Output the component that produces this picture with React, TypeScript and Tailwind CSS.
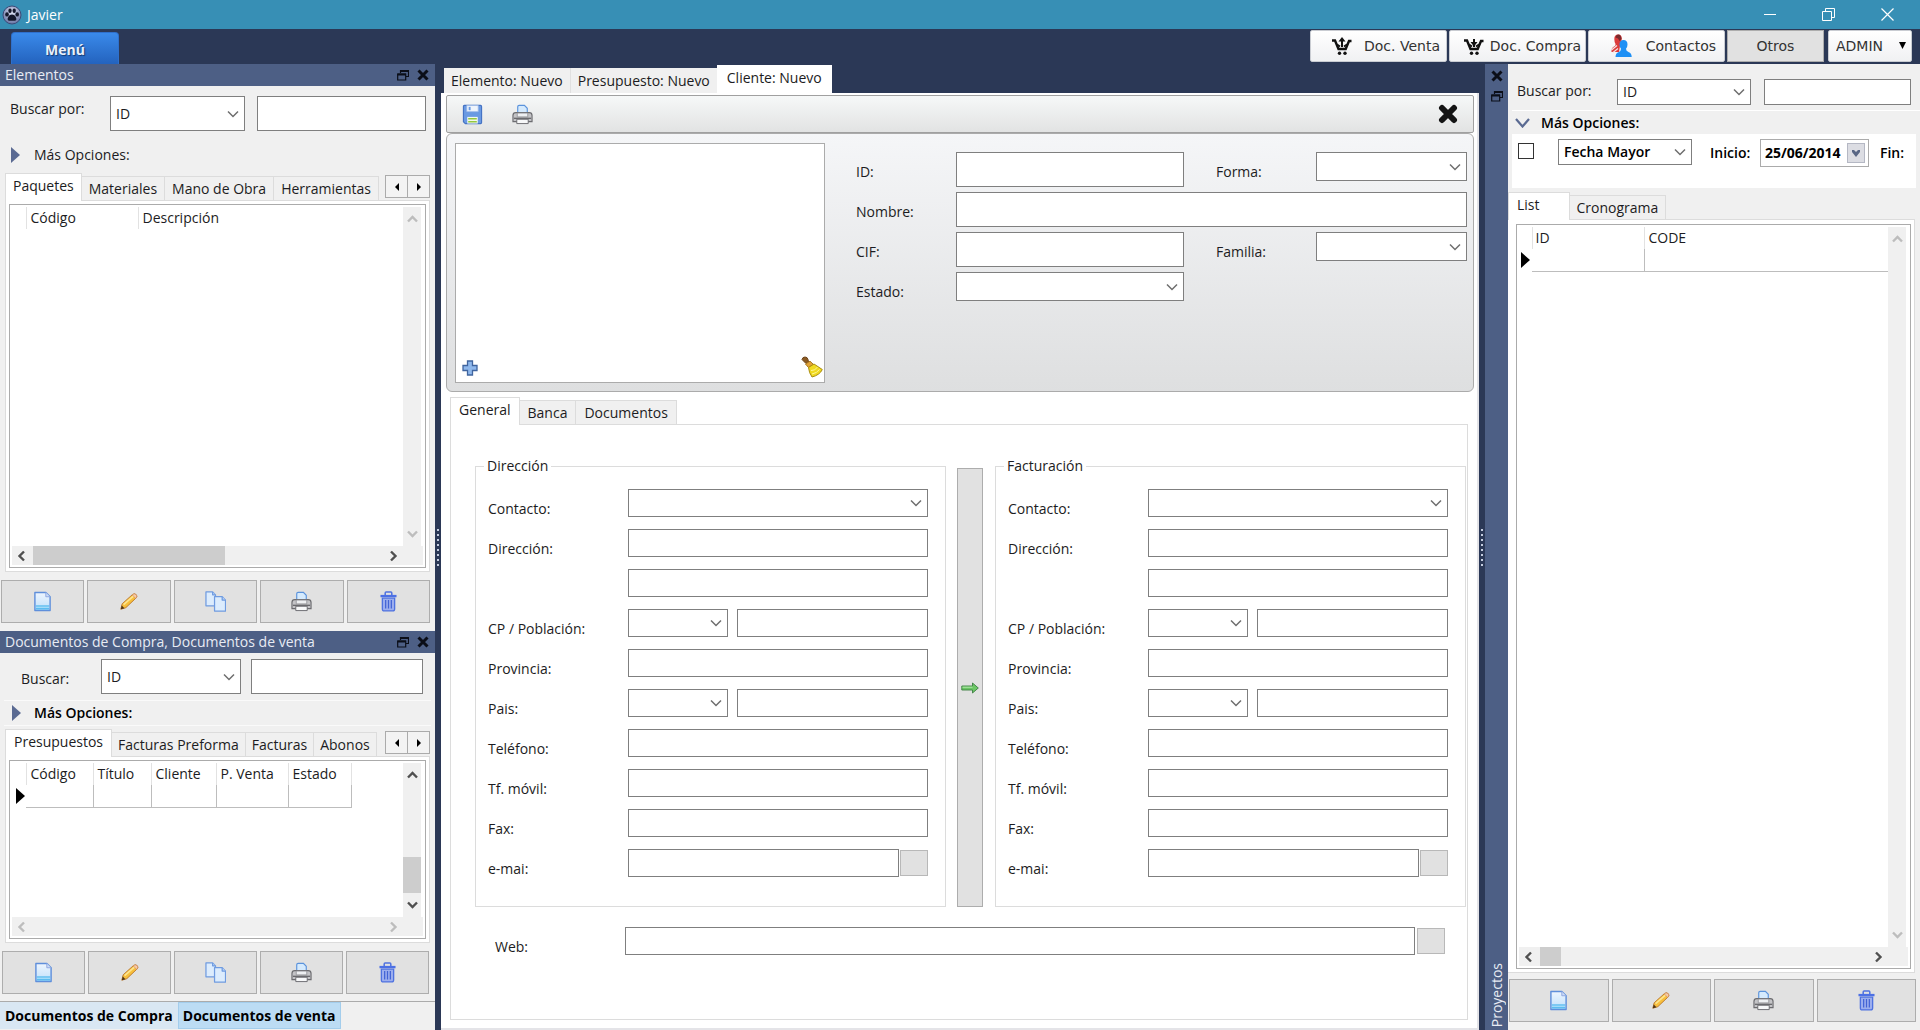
import React, { useState } from "react";

type ToolIcon = "new" | "edit" | "copy" | "print" | "delete";

/* ---------- Icons ---------- */

const PawIcon = () => (
  <svg width="20" height="20" viewBox="0 0 20 20">
    <defs>
      <radialGradient id="paw" cx="50%" cy="35%" r="60%">
        <stop offset="0" stopColor="#dfe3f5" />
        <stop offset="1" stopColor="#6f7ba8" />
      </radialGradient>
    </defs>
    <circle cx="10" cy="10" r="9" fill="url(#paw)" stroke="#3c4a78" />
    <g fill="#14182c">
      <ellipse cx="5" cy="9.4" rx="1.8" ry="2.2" />
      <ellipse cx="8" cy="5.8" rx="1.7" ry="2.2" />
      <ellipse cx="12.2" cy="5.8" rx="1.7" ry="2.2" />
      <ellipse cx="15.2" cy="9.4" rx="1.8" ry="2.2" />
      <path d="M10 9.500c2.600 0 4.800 3.200 4.300 5-.4 1.800-2.500 1.200-4.300 1.200s-3.900.6-4.300-1.200C5.200 12.700 7.400 9.500 10 9.500Z" />
    </g>
  </svg>
);

const PageIcon = () => (
  <svg width="19" height="21" viewBox="0 0 20 22">
    <defs>
      <linearGradient id="page" x1="0" y1="0" x2="0" y2="1">
        <stop offset="0" stopColor="#eef5fe" />
        <stop offset="1" stopColor="#bfe0fb" />
      </linearGradient>
    </defs>
    <path d="M2 1.500h11.500l4.500 4.500v14.500H2Z" fill="url(#page)" stroke="#5f8fdb" strokeWidth="1.500" strokeLinejoin="round" />
    <path d="M13.500 1.500v4.500H18" fill="#cddcf7" stroke="#8ea6e0" />
    <path d="M3 15h14v4.500H3z" fill="#5bbcf0" />
    <path d="M3 17h14" stroke="#c9ecfd" />
  </svg>
);

const PencilIcon = () => (
  <svg width="20" height="19" viewBox="0 0 22 20">
    <path d="M2 18.500 3.500 12.500 15 2.200q2-1.500 4 .3 1.500 2-.2 3.600L7.500 16.800Z" fill="#f7bf3c" stroke="#b9762b" strokeLinejoin="round" />
    <path d="M5 13.500 16.500 3.500" stroke="#fde58f" strokeWidth="1.800" />
    <path d="M14.500 2.700 18.300 6.600 19.200 5.400q1-1.800-.5-3t-3.200-.4Z" fill="#f6c9a8" stroke="#c98257" strokeWidth=".6" />
    <path d="M2 18.500 3 14.500 6 17.300Z" fill="#4a3218" />
  </svg>
);

const CopyIcon = () => (
  <svg width="21" height="21" viewBox="0 0 22 22">
    <g fill="#dcecfd" stroke="#6f9be0" strokeWidth="1.300" strokeLinejoin="round">
      <path d="M1 1h7l3 3v11.500H1Z" />
      <path d="M10 6h8l3.500 3.500V21H10Z" />
      <path d="M18 6v3.500h3.500M8 1v3h3" fill="#b8d4f7" />
    </g>
  </svg>
);

const PrintIcon = () => (
  <svg width="21" height="21" viewBox="0 0 22 22">
    <path d="M6 10V3q0-1.500 1.500-1.500h5.500L16 4.500V10Z" fill="#d5eafd" stroke="#5b93dc" strokeWidth="1.200" />
    <path d="M1 12q0-3 3-3h14q3 0 3 3v6.500H1Z" fill="#c4c4c7" stroke="#6c6c70" strokeWidth="1.200" />
    <path d="M5.500 9.500h11v4h-11z" fill="#eef0f2" stroke="#8b8b90" strokeWidth=".8" />
    <path d="M2 15h18" stroke="#6a6a6e" strokeWidth="1.400" />
    <path d="M5 16h12v4.500H5z" fill="#f7f8f9" stroke="#6c6c70" />
  </svg>
);

const TrashIcon = () => (
  <svg width="17" height="21" viewBox="0 0 18 22">
    <path d="M5.500 4V2q0-1 1-1h5q1 0 1 1v2" fill="none" stroke="#4f72e0" strokeWidth="1.600" />
    <path d="M.5 4h17v2.500H.500z" fill="#4d70e4" />
    <path d="M2.500 7.500h13V19q0 2-2 2h-9q-2 0-2-2Z" fill="#9dafee" stroke="#4f72e0" strokeWidth="1.400" />
    <path d="M6 9.500v9M9 9.500v9M12 9.500v9" stroke="#4263d4" strokeWidth="1.300" />
  </svg>
);

const SaveIcon = () => (
  <svg width="21" height="21" viewBox="0 0 22 22">
    <path d="M1.500 2.500q0-1 1-1h17q1 0 1 1v17q0 1-1 1h-16l-2-2Z" fill="#6a9ae2" stroke="#4573c4" strokeWidth="1.200" />
    <path d="M5 1.500h12V8H5z" fill="#eef4fc" stroke="#9db9e6" strokeWidth=".8" />
    <path d="M7 3h2v3.500H7z" fill="#6a9ae2" />
    <path d="M5.500 13.500h11v7h-11z" fill="#f4f8ee" />
    <path d="M6.500 15.500h9M6.500 18.500h9" stroke="#93c83e" strokeWidth="1.600" />
  </svg>
);

const BroomIcon = () => (
  <svg width="22" height="22" viewBox="0 0 22 22">
    <path d="M1 3.500Q1.500 1 4 1t3 2.500l.5 2.500L5 7.500Z" fill="#8a5a24" stroke="#6d4317" />
    <path d="M4.500 8 9 5.200 12.500 8.500 7.500 11.500Z" fill="#e2a43a" stroke="#a9771f" />
    <path d="M7.500 11.500 13 8 21.300 13.500q-2.500 5.500-10.300 7.500-3-4-3.500-9.500Z" fill="#f0da20" stroke="#a98d12" strokeLinejoin="round" />
    <path d="M10 14.500q4 .5 6.500-3.500M11 18q5-1 7.500-4.500" stroke="#fdf59a" fill="none" />
  </svg>
);

const PlusIcon = () => (
  <svg width="16" height="16" viewBox="0 0 16 16">
    <path d="M5.500 1h5v4.500H15v5h-4.500V15h-5v-4.500H1v-5h4.500Z" fill="#8fb8ec" stroke="#40659f" strokeWidth="1.300" />
  </svg>
);

const ArrowIcon = () => (
  <svg width="18" height="12" viewBox="0 0 18 12">
    <path d="M.8 4h10.700V1L17.300 6l-5.800 5V8H.8Z" fill="#6cc765" stroke="#3c7f42" strokeWidth=".9" />
    <path d="M1.500 5.200h10" stroke="#b3e8ac" />
  </svg>
);

const CartIcon = ({ down }: { down?: boolean }) => (
  <svg width="20" height="18" viewBox="0 0 20 18" fill="none" stroke="#111">
    <path d="M0 3.500h3L6.500 12h7.200L17 4h2.500" strokeWidth="2.400" />
    <path d="M5 7.500 8 9.500M15 7.500 12 9.500" strokeWidth="2" />
    <path d="M10 2v8" strokeWidth="2" />
    {down ? (
      <path d="M6.500 5h7L10 9.500Z" fill="#111" stroke="none" />
    ) : (
      <path d="M6.500 4.500h7L10 0Z" fill="#111" stroke="none" />
    )}
    <circle cx="7.500" cy="16.200" r="1.700" fill="#111" stroke="none" />
    <circle cx="13" cy="16.200" r="1.700" fill="#111" stroke="none" />
  </svg>
);

const PeopleIcon = () => (
  <svg width="22" height="24" viewBox="0 0 22 24">
    <path d="M8 .5q3.800 0 3.800 4.200 0 2.500-1.500 4.500L10 12l-1 6H1.500q-.5-4 2.500-5.500 2-.7 1.500-2.500Q4.300 8 4.300 5 4.300.5 8 .5Z" fill="#dc3b3b" />
    <path d="M5.500 3.500q.5-3 3-3t3 4.500L9.500 7 8 4.500Z" fill="#7a2a2c" />
    <path d="M1.500 16 7 11.500M3 18.500l5-4" stroke="#f3e4e4" strokeWidth="1.200" />
    <path d="M13.500 6q4 0 4 4.500 0 2.500-1.500 4.300 0 2.200 2.500 3.200 3.200 1 3.200 5H5.500q0-4 3.300-5 2.200-.8 2.200-3.200-1.500-1.800-1.500-4.300Q9.500 6 13.500 6Z" fill="#1e90f5" />
  </svg>
);

const RestoreIcon = () => (
  <svg width="12" height="12" viewBox="0 0 12 12" fill="none" stroke="#0b0e18">
    <path d="M3.500 4V1.500h8v6H9" strokeWidth="1.200" />
    <path d="M3 2h9" strokeWidth="2" />
    <path d="M.700 5h8v6h-8Z" strokeWidth="1.200" />
    <path d="M.500 5.500h8.500" strokeWidth="2" />
  </svg>
);

const CloseIcon = () => (
  <svg width="12" height="12" viewBox="0 0 12 12" stroke="#0b0e18" strokeWidth="3">
    <path d="m1.500 1.500 9 9M10.500 1.500l-9 9" />
  </svg>
);

const Chevron = ({ className = "" }: { className?: string }) => (
  <svg width="12" height="8" viewBox="0 0 12 8" className={className} fill="none" stroke="currentColor" strokeWidth="1.500">
    <path d="m1 1.500 5 5 5-5" />
  </svg>
);

const ScrollChevron = ({ className = "" }: { className?: string }) => (
  <svg width="11" height="8" viewBox="0 0 11 8" className={className} fill="none" stroke="currentColor" strokeWidth="2.400">
    <path d="m1 1.500 4.500 4.500L10 1.500" />
  </svg>
);

const RowMarker = () => (
  <svg width="9" height="16" viewBox="0 0 9 16">
    <path d="M0 0 9 8 0 16Z" fill="#000" />
  </svg>
);

const toolIcons: Record<ToolIcon, { label: string; icon: React.ReactNode }> = {
  new: { label: "Nuevo", icon: <PageIcon /> },
  edit: { label: "Editar", icon: <PencilIcon /> },
  copy: { label: "Copiar", icon: <CopyIcon /> },
  print: { label: "Imprimir", icon: <PrintIcon /> },
  delete: { label: "Eliminar", icon: <TrashIcon /> },
};

/* ---------- Basic controls ---------- */

const TextBox = ({ className = "", ...rest }: React.InputHTMLAttributes<HTMLInputElement>) => (
  <input
    type="text"
    className={`min-w-0 bg-white border-[#7f7f7f] outline-none ${className}`}
    {...rest}
  />
);

type ComboProps = {
  id?: string;
  label?: string;
  options?: string[];
  className?: string;
};

const Combo = ({ id, label, options = [""], className = "" }: ComboProps) => (
  <div className={`relative shrink-0 ${className}`}>
    <select
      id={id}
      aria-label={label}
      className="appearance-none w-full h-full bg-white border border-[#7f7f7f] pl-[5px] pr-5 outline-none"
    >
      {options.map((o) => (
        <option key={o}>{o}</option>
      ))}
    </select>
    <Chevron className="absolute right-1.5 top-1/2 -mt-1 text-[#6e6e6e] pointer-events-none" />
  </div>
);

const SmallButton = ({ label }: { label: string }) => (
  <button aria-label={label} className="w-7 h-[26px] shrink-0 bg-[#e1e1e1] border border-[#b8b8b8]" />
);

/* ---------- Dock pieces ---------- */

const DockHeader = ({ title }: { title: string }) => (
  <div className="h-[22px] flex items-center bg-[#4d5f85] text-[#e8ecf4] pl-[5px] pr-1.5">
    <h2 className="flex-1">{title}</h2>
    <button aria-label="Restaurar" className="mr-2">
      <RestoreIcon />
    </button>
    <button aria-label="Cerrar">
      <CloseIcon />
    </button>
  </div>
);

type TabStripProps = {
  tabs: string[];
  arrows?: boolean;
  activeClass?: string;
  tabClass?: string;
};

const TabStrip = ({ tabs, arrows, activeClass = "px-[7px]", tabClass = "px-1.5" }: TabStripProps) => {
  const [active, setActive] = useState(0);

  return (
    <div className="flex h-[27px] items-end">
      {tabs.map((tab, i) =>
        i === active ? (
          <button
            key={tab}
            onClick={() => setActive(i)}
            className={`relative -mb-px h-7 bg-white border border-b-0 border-[#dcdcdc] pb-1 whitespace-nowrap ${activeClass}`}
          >
            {tab}
          </button>
        ) : (
          <button
            key={tab}
            onClick={() => setActive(i)}
            className={`h-6 bg-[#f0f0f0] border border-l-0 border-b-0 border-[#dcdcdc] whitespace-nowrap ${tabClass}`}
          >
            {tab}
          </button>
        )
      )}
      {arrows && (
        <div className="flex ml-auto self-start mt-0.5">
          <button aria-label="Anterior" className="w-[23px] h-[23px] flex items-center justify-center border border-[#ababab] bg-[#f3f3f3]">
            <svg width="4" height="8" viewBox="0 0 4 8">
              <path d="M4 0v8L0 4Z" />
            </svg>
          </button>
          <button aria-label="Siguiente" className="w-[23px] h-[23px] -ml-px flex items-center justify-center border border-[#ababab] bg-[#f3f3f3]">
            <svg width="4" height="8" viewBox="0 0 4 8">
              <path d="M0 0v8l4-4Z" />
            </svg>
          </button>
        </div>
      )}
    </div>
  );
};

type GridBoxProps = {
  children: React.ReactNode;
  className?: string;
  vThumb?: string;
  hThumb?: string;
};

// Caja blanca con las dos barras de desplazamiento
const GridBox = ({ children, className = "", vThumb, hThumb }: GridBoxProps) => {
  const vColor = vThumb ? "text-[#505050]" : "text-[#bdbdbd]";
  const hColor = hThumb ? "text-[#505050]" : "text-[#bdbdbd]";

  return (
    <div className={`flex flex-col bg-white border border-[#ababab] p-0.5 ${className}`}>
      <div className="flex flex-1">
        <div className="flex-1 min-w-0">{children}</div>
        <div className={`w-[18px] mr-0.5 flex flex-col items-center bg-[#f0f0f0] py-2 ${vColor}`}>
          <ScrollChevron className="rotate-180" />
          <div className="flex-1" />
          {vThumb && <div className={`w-full bg-[#cdcdcd] ${vThumb}`} />}
          <ScrollChevron />
        </div>
      </div>
      <div className={`h-[19px] flex items-center bg-[#f0f0f0] pl-1 pr-6 ${hColor}`}>
        <ScrollChevron className="rotate-90" />
        {hThumb && <div className={`h-full ml-1.5 bg-[#cdcdcd] ${hThumb}`} />}
        <ScrollChevron className="ml-auto -rotate-90" />
      </div>
    </div>
  );
};

const ToolButtons = ({ items, className }: { items: ToolIcon[]; className: string }) => (
  <div className={`grid gap-[3px] ${className}`}>
    {items.map((item) => (
      <button
        key={item}
        aria-label={toolIcons[item].label}
        className="h-[43px] flex items-center justify-center bg-[#e1e1e1] border border-[#adadad]"
      >
        {toolIcons[item].icon}
      </button>
    ))}
  </div>
);

const Grip = () => (
  <div className="w-1.5 shrink-0 flex flex-col items-center justify-center gap-[3px] bg-[#2b3856]">
    {Array.from({ length: 8 }, (_, i) => (
      <span key={i} className="size-0.5 bg-[#c5cde0]" />
    ))}
  </div>
);

/* ---------- Panels ---------- */

const TopBar = () => {
  const btn =
    "h-8 flex items-center justify-end rounded-xs border border-[#c9ccd2] bg-linear-to-b from-white to-[#f0f1f3]";

  return (
    <>
      <header className="h-[29px] flex items-center bg-[#378fb5] text-white pl-0.5 pr-[26px]">
        <PawIcon />
        <h1 className="ml-[5px] flex-1">Javier</h1>
        <button aria-label="Minimizar" className="mr-[46px]">
          <svg width="12" height="12" viewBox="0 0 12 12" stroke="#fff">
            <path d="M0 5.500h12" />
          </svg>
        </button>
        <button aria-label="Restaurar" className="mr-[46px]">
          <svg width="13" height="13" viewBox="0 0 13 13" fill="none" stroke="#fff">
            <path d="M.5 3.500h9v9h-9ZM3.500 3V.500h9v9H10" />
          </svg>
        </button>
        <button aria-label="Cerrar">
          <svg width="13" height="13" viewBox="0 0 13 13" stroke="#fff" strokeWidth="1.200">
            <path d="m.5.500 12 12M12.500.500l-12 12" />
          </svg>
        </button>
      </header>
      <div className="h-[35px] flex items-end bg-[#2b3856] pl-[11px] pr-2">
        <button className="w-[108px] h-8 pt-0.5 rounded-t bg-linear-to-b from-[#3a8aea] to-[#2463be] border border-b-0 border-[#2f70cc] font-bold text-[#e9f0fa] text-shadow-[1px_1px_1px_#123a75]">
          Menú
        </button>
        <nav className="ml-auto self-start mt-px flex gap-0.5 font-['DejaVu_Sans',sans-serif] text-[#333]">
          <button className={`${btn} w-[137px] pr-1.5 gap-3`}>
            <CartIcon />
            Doc. Venta
          </button>
          <button className={`${btn} w-[137px] pr-1 gap-1.5`}>
            <CartIcon down />
            Doc. Compra
          </button>
          <button className={`${btn} w-[137px] pr-2 gap-3.5`}>
            <PeopleIcon />
            Contactos
          </button>
          <button className="w-[97px] h-8 bg-[#e1e1e1] border border-[#adadad]">Otros</button>
          <div className="relative w-[84px] ml-0.5">
            <select
              aria-label="Usuario"
              className="appearance-none w-full h-8 rounded-xs bg-linear-to-b from-white to-[#f0f1f3] border border-[#c9ccd2] pl-[7px]"
            >
              <option>ADMIN</option>
            </select>
            <svg width="7" height="7" viewBox="0 0 7 7" className="absolute right-1.5 top-3 pointer-events-none">
              <path d="M0 0h7L3.500 7Z" />
            </svg>
          </div>
        </nav>
      </div>
    </>
  );
};

const Elementos = () => (
  <section className="flex-1 flex flex-col">
    <DockHeader title="Elementos" />
    <div className="flex pt-2.5 pl-2.5 pr-[9px]">
      <label htmlFor="buscar-elementos" className="w-[100px] leading-[26px]">
        Buscar por:
      </label>
      <Combo id="buscar-elementos" options={["ID"]} className="w-[135px] h-[35px]" />
      <TextBox aria-label="Texto a buscar" className="border px-1.5 flex-1 h-[35px] ml-3" />
    </div>
    <button className="h-[42px] flex items-center pt-1.5 pl-[11px] text-left">
      <svg width="9" height="16" viewBox="0 0 9 16" className="mr-3.5">
        <path d="M0 0 9 8 0 16Z" fill="#5a6a92" />
      </svg>
      Más Opciones:
    </button>
    <div className="flex-1 flex flex-col px-[5px]">
      <TabStrip tabs={["Paquetes", "Materiales", "Mano de Obra", "Herramientas"]} arrows tabClass="px-[7px]" />
      <div className="flex-1 flex flex-col bg-white border border-[#dcdcdc] p-[3px]">
        <GridBox className="flex-1" hThumb="w-48">
          <table className="w-full table-fixed">
            <thead>
              <tr className="h-[22px] text-left">
                <th className="w-3.5" />
                <th className="w-28 font-normal border-l border-[#e2e2e2] pl-1">Código</th>
                <th className="font-normal border-l border-[#e2e2e2] pl-1">Descripción</th>
              </tr>
            </thead>
          </table>
        </GridBox>
      </div>
    </div>
    <ToolButtons items={["new", "edit", "copy", "print", "delete"]} className="grid-cols-5 py-2 pl-px pr-[5px]" />
  </section>
);

const Documentos = () => (
  <section className="flex flex-col">
    <DockHeader title="Documentos de Compra, Documentos de venta" />
    <div className="flex pt-1.5 pl-[21px] pr-3">
      <label htmlFor="buscar-docs" className="w-20 h-[35px] leading-10">
        Buscar:
      </label>
      <Combo id="buscar-docs" options={["ID"]} className="w-[140px] h-[35px]" />
      <TextBox aria-label="Texto a buscar" className="border px-1.5 flex-1 h-[35px] ml-2.5" />
    </div>
    <button className="h-[26px] mt-1.5 mb-[3px] mx-1 flex items-center border-y border-[#fafafa] pl-2 text-left font-semibold text-black">
      <svg width="9" height="16" viewBox="0 0 9 16" className="mr-[13px]">
        <path d="M0 0 9 8 0 16Z" fill="#5a6a92" />
      </svg>
      Más Opciones:
    </button>
    <div className="px-[5px]">
      <TabStrip tabs={["Presupuestos", "Facturas Preforma", "Facturas", "Abonos"]} arrows activeClass="px-2" />
      <div className="bg-white border border-[#dcdcdc] p-[3px]">
        <GridBox className="h-[179px]" vThumb="h-9 mb-2">
          <table className="table-fixed w-[340px]">
            <thead>
              <tr className="h-[22px] text-left">
                <th className="w-3.5" />
                <th className="w-[67px] font-normal border-l border-[#e2e2e2] pl-1">Código</th>
                <th className="w-[58px] font-normal border-l border-[#e2e2e2] pl-1">Título</th>
                <th className="w-[65px] font-normal border-l border-[#e2e2e2] pl-1">Cliente</th>
                <th className="w-[72px] font-normal border-l border-[#e2e2e2] pl-1">P. Venta</th>
                <th className="font-normal border-x border-[#e2e2e2] pl-1">Estado</th>
              </tr>
            </thead>
            <tbody>
              <tr className="h-[22px]">
                <td className="pl-1">
                  <RowMarker />
                </td>
                <td className="border-r border-b border-[#bdbdbd]" />
                <td className="border-r border-b border-[#bdbdbd]" />
                <td className="border-r border-b border-[#bdbdbd]" />
                <td className="border-r border-b border-[#bdbdbd]" />
                <td className="border-r border-b border-[#bdbdbd]" />
              </tr>
            </tbody>
          </table>
        </GridBox>
      </div>
    </div>
    <ToolButtons items={["new", "edit", "copy", "print", "delete"]} className="grid-cols-5 pt-2 pb-[7px] pl-0.5 pr-1.5" />
    <div className="flex h-[29px] border-t border-[#ababab] font-bold text-black">
      <button className="h-[27px] px-[5px] bg-[#d9e7f3] whitespace-nowrap">Documentos de Compra</button>
      <button className="h-[27px] px-1 bg-[#bcdcf4] border border-[#a3cdec] whitespace-nowrap">Documentos de venta</button>
    </div>
  </section>
);

const AddressGroup = ({ title, prefix }: { title: string; prefix: string }) => {
  const row = "flex h-7";
  const label = "w-[140px] shrink-0 pt-2.5 leading-5";
  const box = "border px-1.5 flex-1";
  const id = (name: string) => `${prefix}-${name}`;

  return (
    <fieldset className="flex-1 min-w-0 border border-[#dcdcdc] pl-3 pr-[17px] pb-[29px]">
      <legend className="h-5 leading-5 -ml-1 px-[3px]">{title}</legend>
      <div className="flex flex-col gap-3 pt-[13px]">
        <div className={row}>
          <label htmlFor={id("contacto")} className={label}>Contacto:</label>
          <Combo id={id("contacto")} className="flex-1" />
        </div>
        <div className={row}>
          <label htmlFor={id("direccion")} className={label}>Dirección:</label>
          <TextBox id={id("direccion")} className={box} />
        </div>
        <div className={`${row} pl-[140px]`}>
          <TextBox aria-label="Dirección, segunda línea" className={box} />
        </div>
        <div className={row}>
          <label htmlFor={id("cp")} className={label}>CP / Población:</label>
          <Combo id={id("cp")} className="w-[100px] mr-[9px]" />
          <TextBox aria-label="Población" className={box} />
        </div>
        <div className={row}>
          <label htmlFor={id("provincia")} className={label}>Provincia:</label>
          <TextBox id={id("provincia")} className={box} />
        </div>
        <div className={row}>
          <label htmlFor={id("pais")} className={label}>Pais:</label>
          <Combo id={id("pais")} className="w-[100px] mr-[9px]" />
          <TextBox aria-label="Nombre del país" className={box} />
        </div>
        <div className={row}>
          <label htmlFor={id("telefono")} className={label}>Teléfono:</label>
          <TextBox id={id("telefono")} className={box} />
        </div>
        <div className={row}>
          <label htmlFor={id("movil")} className={label}>Tf. móvil:</label>
          <TextBox id={id("movil")} className={box} />
        </div>
        <div className={row}>
          <label htmlFor={id("fax")} className={label}>Fax:</label>
          <TextBox id={id("fax")} className={box} />
        </div>
        <div className={row}>
          <label htmlFor={id("email")} className={label}>e-mai:</label>
          <TextBox id={id("email")} className={`${box} mr-px`} />
          <div className="flex items-center">
            <SmallButton label="Enviar e-mail" />
          </div>
        </div>
      </div>
    </fieldset>
  );
};

const ClienteForm = () => {
  const label = "leading-10 self-start";

  return (
    <main className="flex-1 min-w-0 flex flex-col bg-[#2b3856]">
      <div className="flex items-end h-[29px] pl-[3px]">
        <button className="h-[25px] px-[7px] bg-[#f0f0f0] border-r border-[#e0e0e0]">Elemento: Nuevo</button>
        <button className="h-[25px] px-[7px] bg-[#f0f0f0]">Presupuesto: Nuevo</button>
        <button className="h-7 px-2.5 pb-0.5 bg-white">Cliente: Nuevo</button>
      </div>
      <div className="flex-1 flex flex-col bg-white border-r-2 border-b-2 border-[#e4e4e8] pt-0.5 pl-[5px] pr-[3px]">
        <div className="h-[38px] flex items-center border border-[#a0a0a0] rounded-xs bg-linear-to-b from-[#f6f8f8] to-[#e2e3e3] px-[15px]">
          <button aria-label="Guardar" className="mr-[29px]">
            <SaveIcon />
          </button>
          <button aria-label="Imprimir">
            <PrintIcon />
          </button>
          <button aria-label="Cerrar" className="ml-auto">
            <svg width="20" height="20" viewBox="0 0 20 20" stroke="#141414" strokeWidth="6" strokeLinecap="round">
              <path d="m4 4 12 12M16 4 4 16" />
            </svg>
          </button>
        </div>

        <div className="flex border border-[#ababab] rounded-md bg-linear-to-b from-[#f5f6f8] to-[#dedfe0] pt-[9px] pb-2 pl-2 pr-1.5">
          <div className="w-[370px] h-60 shrink-0 flex items-end justify-between bg-white border border-[#ababab] pl-1.5 pr-px pb-1">
            <button aria-label="Añadir imagen" className="mb-0.5">
              <PlusIcon />
            </button>
            <button aria-label="Limpiar imagen">
              <BroomIcon />
            </button>
          </div>
          <div className="flex-1 grid grid-cols-[100px_228px_132px_1fr] auto-rows-[35px] gap-y-[5px] content-start pt-[9px] pl-[31px]">
            <label htmlFor="id" className={label}>ID:</label>
            <TextBox id="id" className="border px-1.5" />
            <label htmlFor="forma" className={`${label} pl-8`}>Forma:</label>
            <Combo id="forma" className="h-[29px]" />

            <label htmlFor="nombre" className={label}>Nombre:</label>
            <TextBox id="nombre" className="border px-1.5 col-span-3" />

            <label htmlFor="cif" className={label}>CIF:</label>
            <TextBox id="cif" className="border px-1.5" />
            <label htmlFor="familia" className={`${label} pl-8`}>Familia:</label>
            <Combo id="familia" className="h-[29px]" />

            <label htmlFor="estado" className={label}>Estado:</label>
            <Combo id="estado" className="h-[29px]" />
          </div>
        </div>

        <div className="flex-1 flex flex-col pt-[5px] pl-1 pr-1.5 pb-2">
          <TabStrip tabs={["General", "Banca", "Documentos"]} activeClass="px-2" tabClass="px-2" />
          <div className="flex-1 border border-[#dcdcdc] pt-[31px] pl-6 pr-px">
            <div className="flex">
              <AddressGroup title="Dirección" prefix="dir" />
              <button
                aria-label="Copiar dirección a facturación"
                className="w-[26px] mt-3 ml-[11px] mr-3 flex items-center justify-center bg-[#e1e1e1] border border-[#adadad]"
              >
                <ArrowIcon />
              </button>
              <AddressGroup title="Facturación" prefix="fac" />
            </div>
            <div className="flex h-7 mt-5 pl-5 pr-[21px]">
              <label htmlFor="web" className="w-[130px] pt-2.5 leading-5">Web:</label>
              <TextBox id="web" className="border px-1.5 flex-1 mr-0.5" />
              <div className="flex items-center">
                <SmallButton label="Abrir web" />
              </div>
            </div>
          </div>
        </div>
      </div>
    </main>
  );
};

const Proyectos = () => (
  <aside className="w-[435px] shrink-0 flex bg-[#f0f0f0]">
    <div className="w-[23px] flex flex-col items-center bg-[#4d5f85] pt-1.5 pb-[3px]">
      <button aria-label="Cerrar" className="mb-2">
        <CloseIcon />
      </button>
      <button aria-label="Restaurar">
        <RestoreIcon />
      </button>
      <h2 className="mt-auto leading-5 text-[#e8ecf4] [writing-mode:vertical-rl] rotate-180">Proyectos</h2>
    </div>
    <div className="flex-1 min-w-0 flex flex-col">
      <div className="flex pt-[15px] pl-[9px] pr-[9px]">
        <label htmlFor="buscar-proyectos" className="w-[100px] leading-6">
          Buscar por:
        </label>
        <Combo id="buscar-proyectos" options={["ID"]} className="w-[134px] h-[26px]" />
        <TextBox aria-label="Texto a buscar" className="border px-1.5 flex-1 h-[26px] ml-[13px]" />
      </div>
      <button className="h-6 mt-[5px] ml-1 flex items-center pl-[3px] font-semibold text-black border-t border-white">
        <svg width="15" height="10" viewBox="0 0 15 10" className="mr-[11px]" fill="none" stroke="#5a6a92" strokeWidth="2.200">
          <path d="m1 1 6.500 7.500L14 1" />
        </svg>
        Más Opciones:
      </button>
      <div className="h-[54px] mx-1 flex items-start bg-white pt-[5px] pl-1.5 font-bold text-black">
        <input
          type="checkbox"
          aria-label="Filtrar por fecha"
          className="appearance-none size-4 mt-1 mr-6 shrink-0 border border-[#333] bg-white checked:bg-[#4d5f85]"
        />
        <Combo label="Tipo de fecha" options={["Fecha Mayor"]} className="w-[134px] h-[26px] font-semibold" />
        <label htmlFor="inicio" className="ml-[18px] w-[50px] shrink-0 leading-7 font-semibold">Inicio:</label>
        <div className="flex w-[109px] h-7 shrink-0 border border-[#ababab] bg-white">
          <TextBox id="inicio" defaultValue="25/06/2014" className="flex-1 pl-1" />
          <button aria-label="Abrir calendario" className="w-[18px] my-[3px] mr-[3px] flex items-center justify-center bg-[#dcdde3] border border-[#b5b8c4]">
            <svg width="8" height="7" viewBox="0 0 8 7">
              <path d="M0 0h2l2 2 2-2h2v2L4 7 0 2Z" fill="#596785" />
            </svg>
          </button>
        </div>
        <span className="ml-[11px] leading-7 font-semibold">Fin:</span>
      </div>
      <div className="flex-1 flex flex-col pt-1 pr-[5px]">
        <TabStrip tabs={["List", "Cronograma"]} activeClass="pl-2 pr-[29px]" tabClass="px-[7px]" />
        <div className="flex-1 flex flex-col bg-white border border-l-0 border-[#dcdcdc] pt-1 pb-[3px] pl-2 pr-[3px]">
          <GridBox className="flex-1" hThumb="w-[21px]">
            <table className="w-full table-fixed">
              <thead>
                <tr className="h-[22px] text-left">
                  <th className="w-[13px]" />
                  <th className="w-28 font-normal border-l border-[#e2e2e2] pl-[3px]">ID</th>
                  <th className="font-normal border-l border-[#e2e2e2] pl-1">CODE</th>
                </tr>
              </thead>
              <tbody>
                <tr className="h-[22px]">
                  <td className="pl-0.5">
                    <RowMarker />
                  </td>
                  <td className="border-r border-b border-[#bdbdbd]" />
                  <td className="border-b border-[#bdbdbd]" />
                </tr>
              </tbody>
            </table>
          </GridBox>
        </div>
      </div>
      <ToolButtons items={["new", "edit", "print", "delete"]} className="grid-cols-4 pt-1.5 pb-2 pl-px pr-1" />
    </div>
  </aside>
);

const App = () => (
  <div className="min-h-screen flex flex-col bg-[#2b3856] font-['Open_Sans','Noto_Sans',sans-serif] text-sm text-[#1c1c22]">
    <TopBar />
    <div className="flex-1 flex">
      <aside className="w-[435px] shrink-0 flex flex-col bg-[#f0f0f0]">
        <Elementos />
        <Documentos />
      </aside>
      <Grip />
      <ClienteForm />
      <Grip />
      <Proyectos />
    </div>
  </div>
);

export default App;
